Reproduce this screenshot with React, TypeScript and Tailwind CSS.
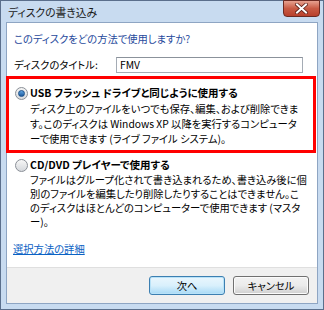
export default function App() {
  return (
    <div className="w-[324px] h-[310px] flex flex-col border border-[#5b6f8c] bg-[#c8dbf0] font-['Noto_Sans_CJK_JP',sans-serif] text-[10.3px] leading-[14px] text-black [font-feature-settings:'palt']">
      {/* Title bar */}
      <div className="h-[21px] flex items-start justify-between shrink-0">
        <div className="pl-[7px] pt-[4px] text-[10.8px] leading-[14px] text-[#1a1a1a]">ディスクの書き込み</div>
        <div className="mr-[3px] -mt-px w-[37px] h-[17px] rounded-b-[4px] border border-[#6b2a22] bg-gradient-to-b from-[#e6a190] via-[#c85a44] to-[#b8402c] flex items-center justify-center">
          <svg width="13" height="11" viewBox="0 0 13 11">
            <path d="M2 1.5 L11 9.5 M11 1.5 L2 9.5" stroke="#5a1f18" strokeWidth="3.6" strokeLinecap="square" />
            <path d="M2 1.5 L11 9.5 M11 1.5 L2 9.5" stroke="#ffffff" strokeWidth="2" strokeLinecap="square" />
          </svg>
        </div>
      </div>

      {/* Content panel */}
      <div className="mx-[5px] mb-[5px] flex-1 flex flex-col border border-[#8ea5c3] bg-white">
        <div className="flex-1 flex flex-col">
          <div className="pl-[7px] pt-[9px] text-[#1f4a9c]">このディスクをどの方法で使用しますか?</div>

          <div className="flex items-center pl-[7px] pt-[11px]">
            <span className="w-[102px]">ディスクのタイトル:</span>
            <div className="w-[187px] h-[16px] border border-[#a5acb5] border-t-[#8b929b] bg-white pl-[3px] leading-[14px]">FMV</div>
          </div>

          {/* Option 1 (highlighted) */}
          <div className="mt-[3px] -ml-px mr-px border-[3px] border-[#ff0000] pl-[6px] pr-[2px] pt-[7px] pb-[4px]">
            <div className="flex items-center gap-[2px]">
              <span className="w-[13px] h-[13px] rounded-full border border-[#8a8f97] bg-gradient-to-b from-[#f4f4f4] to-[#d9dcdf] flex items-center justify-center">
                <span className="w-[7px] h-[7px] rounded-full bg-gradient-to-b from-[#5fa5e2] to-[#1d5b9e] border border-[#1a4f88]" />
              </span>
              <span className="font-bold text-[10.5px]">USB フラッシュ ドライブと同じように使用する</span>
            </div>
            <div className="pl-[15px] pt-[1px] leading-[15px] whitespace-nowrap">
              ディスク上のファイルをいつでも保存、編集、および削除できま
              <br />
              す。このディスクは Windows XP 以降を実行するコンピュータ
              <br />
              ーで使用できます (ライブ ファイル システム)。
            </div>
          </div>

          {/* Option 2 */}
          <div className="pl-[8px] pr-[2px] pt-[5px]">
            <div className="flex items-center gap-[2px]">
              <span className="w-[13px] h-[13px] rounded-full border border-[#8a8f97] bg-gradient-to-b from-[#f7f7f7] to-[#d5d8dc]" />
              <span className="font-bold text-[10.5px]">CD/DVD プレイヤーで使用する</span>
            </div>
            <div className="pl-[15px] pt-[1px] whitespace-nowrap">
              ファイルはグループ化されて書き込まれるため、書き込み後に個
              <br />
              別のファイルを編集したり削除したりすることはできません。こ
              <br />
              のディスクはほとんどのコンピューターで使用できます (マスタ
              <br />
              ー)。
            </div>
          </div>

          <div className="pl-[6px] pt-[13px]">
            <span className="text-[#0a62c4] underline">選択方法の詳細</span>
          </div>
        </div>

        {/* Footer */}
        <div className="h-[36px] shrink-0 border-t border-[#dfdfdf] bg-[#f0f0f0] flex items-center justify-end gap-[8px] pr-[8px]">
          <button className="w-[76px] h-[19px] rounded-[3px] border border-[#3c7fb1] bg-gradient-to-b from-[#eaf6fd] via-[#d9f0fc] to-[#a7d9f5] shadow-[inset_0_0_0_1px_#b8e2f8] leading-[14px]">次へ</button>
          <button className="w-[76px] h-[19px] rounded-[3px] border border-[#707070] bg-gradient-to-b from-[#f2f2f2] via-[#ebebeb] to-[#cfcfcf] shadow-[inset_0_0_0_1px_#fbfbfb] leading-[14px]">キャンセル</button>
        </div>
      </div>
    </div>
  );
}
